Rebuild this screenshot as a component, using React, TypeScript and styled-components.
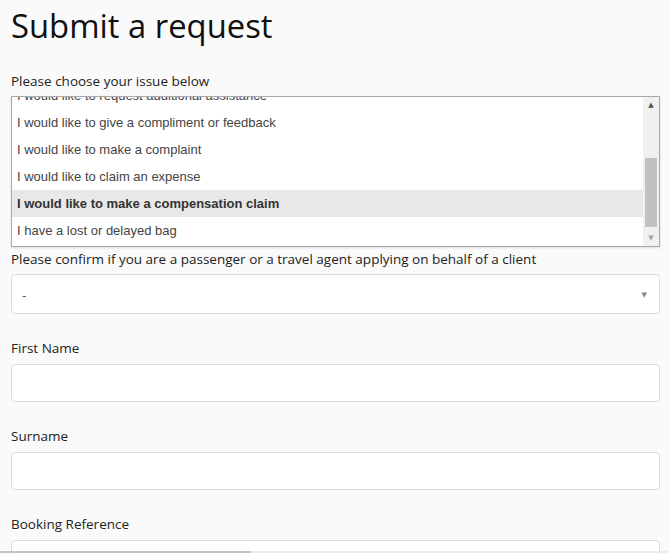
import React from "react";
import styled, { createGlobalStyle } from "styled-components";

const issues = [
  "I would like to request additional assistance",
  "I would like to give a compliment or feedback",
  "I would like to make a complaint",
  "I would like to claim an expense",
  "I would like to make a compensation claim",
  "I have a lost or delayed bag",
];

const selectedIssue = 4;

const fields = ["First Name", "Surname", "Booking Reference"];

export default function App() {
  return (
    <>
      <GlobalStyle />
      <Page>
        <Title>Submit a request</Title>
        <Label>Please choose your issue below</Label>
        <ListBox>
          <Options>
            {issues.map((issue, i) => (
              <Option key={issue} selected={i === selectedIssue}>
                {issue}
              </Option>
            ))}
          </Options>
          <ScrollBar>
            <Arrow>▲</Arrow>
            <Track>
              <Thumb />
            </Track>
            <Arrow faded>▼</Arrow>
          </ScrollBar>
        </ListBox>
        <ConfirmLabel>
          Please confirm if you are a passenger or a travel agent applying on
          behalf of a client
        </ConfirmLabel>
        <SelectBox>
          <span>-</span>
          <Caret>▼</Caret>
        </SelectBox>
        {fields.map((field) => (
          <Field key={field}>
            <Label>{field}</Label>
            <Input />
          </Field>
        ))}
      </Page>
      <BottomBar>
        <BarDark />
      </BottomBar>
    </>
  );
}

const GlobalStyle = createGlobalStyle`
  html, body {
    margin: 0;
    padding: 0;
    background: #fafafa;
  }
  body {
    font-family: "Open Sans", "Noto Sans", sans-serif;
    color: #222;
  }
`;

const Page = styled.div`
  display: flex;
  flex-direction: column;
  padding: 0 9px 0 11px;
`;

const Title = styled.h1`
  margin: 4px 0 24px;
  font-family: "Open Sans", sans-serif;
  font-size: 32.8px;
  font-weight: 400;
  line-height: 44px;
  color: #111;
`;

const Label = styled.label`
  display: block;
  font-size: 13.5px;
  line-height: 18px;
  color: #222;
  margin: 0 0 6px;
`;

const ListBox = styled.div`
  display: flex;
  height: 149px;
  border: 1px solid #a9a9a9;
  background: #fff;
  overflow: hidden;
  box-shadow: 0 1px 2px rgba(0, 0, 0, 0.12);
`;

const Options = styled.div`
  flex: 1;
  display: flex;
  flex-direction: column;
  margin-top: -15px;
`;

const Option = styled.div<{ selected?: boolean }>`
  height: 27px;
  flex-shrink: 0;
  display: flex;
  align-items: center;
  padding-left: 5px;
  font-family: "Liberation Sans", Arial, sans-serif;
  font-size: 13px;
  font-weight: ${(p) => (p.selected ? 700 : 400)};
  color: ${(p) => (p.selected ? "#333" : "#444")};
  background: ${(p) => (p.selected ? "#e8e8e8" : "#fff")};
`;

const ScrollBar = styled.div`
  width: 16px;
  display: flex;
  flex-direction: column;
  background: #f0f0f0;
`;

const Arrow = styled.div<{ faded?: boolean }>`
  height: 16px;
  display: flex;
  align-items: center;
  justify-content: center;
  font-size: 7px;
  color: ${(p) => (p.faded ? "#a3a3a3" : "#505050")};
  font-family: "DejaVu Sans", sans-serif;
`;

const Track = styled.div`
  flex: 1;
  display: flex;
  flex-direction: column;
  justify-content: flex-end;
  padding: 0 2px 3px;
`;

const Thumb = styled.div`
  height: 69px;
  background: #c1c1c1;
`;

const ConfirmLabel = styled(Label)`
  margin: 3px 0 6px;
`;

const SelectBox = styled.div`
  height: 38px;
  display: flex;
  align-items: center;
  justify-content: space-between;
  padding: 0 12px 0 10px;
  background: #fff;
  border: 1px solid #ddd;
  border-radius: 4px;
  font-family: "Liberation Sans", Arial, sans-serif;
  font-size: 13px;
  color: #555;
  span {
    padding-top: 2px;
  }
`;

const Caret = styled.span`
  font-size: 7px;
  color: #888;
  font-family: "DejaVu Sans", sans-serif;
`;

const Field = styled.div`
  margin-top: 25px;
  & > label {
    margin-bottom: 7px;
  }
`;

const Input = styled.div`
  height: 36px;
  background: #fff;
  border: 1px solid #ddd;
  border-radius: 4px;
`;

const BottomBar = styled.div`
  position: fixed;
  left: 0;
  right: 0;
  bottom: 1px;
  height: 2px;
  background: #ececec;
`;

const BarDark = styled.div`
  width: 251px;
  height: 100%;
  background: #c4c4c4;
`;
